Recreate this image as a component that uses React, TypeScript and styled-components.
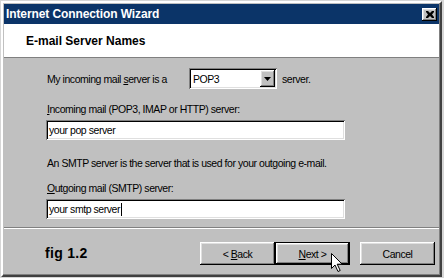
import React from "react";
import styled, { createGlobalStyle } from "styled-components";

const GlobalStyle = createGlobalStyle`
	html, body {
		margin: 0;
		padding: 0;
		background: #d6d6d6;
		width: 444px;
		height: 278px;
		overflow: hidden;
	}
	body {
		font-family: "Liberation Sans", Arial, sans-serif;
		font-size: 10.5px;
		letter-spacing: -0.45px;
		color: #000;
	}
`;

const raised = `
	box-shadow: inset -1px -1px #000, inset 1px 1px #fff, inset -2px -2px #808080,
		inset 2px 2px #dfdfdf;
`;

const sunken = `
	box-shadow: inset 1px 1px #808080, inset -1px -1px #fff, inset 2px 2px #000,
		inset -2px -2px #dfdfdf;
`;

const App = () => {
	return (
		<>
			<GlobalStyle />
			<Window>
				<TitleBar>
					<TitleText>Internet Connection Wizard</TitleText>
					<CloseButton aria-label="Close">
						<svg width="8" height="7" viewBox="0 0 8 7">
							<path
								d="M0 0h2l2 2 2-2h2v1L6 3.5 8 6v1H6L4 5 2 7H0V6l2-2.5L0 1z"
								fill="#000"
							/>
						</svg>
					</CloseButton>
				</TitleBar>

				<Header>
					<HeaderTitle>E-mail Server Names</HeaderTitle>
				</Header>

				<Body>
					<Row $top={10}>
						<RowLabel>
							My incoming mail <u>s</u>erver is a
						</RowLabel>
						<Select>
							<SelectValue>POP3</SelectValue>
							<SelectButton>
								<svg width="7" height="4" viewBox="0 0 7 4">
									<path d="M0 0h7L3.5 4z" fill="#000" />
								</svg>
							</SelectButton>
						</Select>
						<Suffix>server.</Suffix>
					</Row>

					<Label $top={14}>
						<u>I</u>ncoming mail (POP3, IMAP or HTTP) server:
					</Label>
					<TextBox $top={4}>your pop server</TextBox>

					<Label $top={17}>
						An SMTP server is the server that is used for your outgoing e-mail.
					</Label>
					<Label $top={12}>
						<u>O</u>utgoing mail (SMTP) server:
					</Label>
					<TextBox $top={4}>
						your smtp server
						<Caret />
					</TextBox>
				</Body>

				<Separator />

				<Footer>
					<FigLabel>fig 1.2</FigLabel>
					<ButtonGroup>
						<Button>
							&lt; <u>B</u>ack
						</Button>
						<Button $default>
							<u>N</u>ext &gt;
						</Button>
						<Button $gap={10}>Cancel</Button>
					</ButtonGroup>
				</Footer>

				<Pointer width="12" height="20" viewBox="0 0 12 20">
					<path
						d="M0.5 0.5v15l3.5-3.5 3 6.5 2.2-1-3-6.3h5z"
						fill="#fff"
						stroke="#000"
						strokeWidth="1"
						strokeLinejoin="miter"
					/>
				</Pointer>
			</Window>
		</>
	);
};

const Window = styled.div`
	position: relative;
	box-sizing: border-box;
	width: 441px;
	height: 276px;
	margin: 1px 0 0 1px;
	padding: 1px;
	background: #c0c0c0;
	border-top: 2px solid #ffffff;
	border-left: 2px solid #ffffff;
	border-right: 2px solid #404040;
	border-bottom: 2px solid #404040;
	box-shadow: inset -1px -1px #808080;
	display: flex;
	flex-direction: column;
	overflow: hidden;
`;

const TitleBar = styled.div`
	height: 20px;
	flex-shrink: 0;
	background: #0b3468;
	display: flex;
	align-items: center;
	justify-content: space-between;
	padding: 0 2px 0 2px;
`;

const TitleText = styled.span`
	font-weight: bold;
	font-size: 12px;
	letter-spacing: -0.1px;
	color: #fff;
`;

const CloseButton = styled.button`
	width: 15px;
	height: 13px;
	padding: 0;
	border: none;
	background: #c0c0c0;
	display: flex;
	align-items: center;
	justify-content: center;
	${raised}
`;

const Header = styled.div`
	height: 33px;
	flex-shrink: 0;
	background: #fff;
	border-bottom: 1px solid #808080;
	display: flex;
	align-items: center;
	padding-left: 22px;
`;

const HeaderTitle = styled.h1`
	margin: 0;
	font-size: 12px;
	font-weight: bold;
	letter-spacing: 0;
`;

const Body = styled.div`
	height: 169px;
	flex-shrink: 0;
	display: flex;
	flex-direction: column;
	padding-left: 42px;
`;

const Row = styled.div<{ $top: number }>`
	margin-top: ${(p) => p.$top}px;
	display: flex;
	align-items: center;
	height: 21px;
`;

const RowLabel = styled.span`
	width: 142px;
	padding-left: 1px;
`;

const Select = styled.div`
	box-sizing: border-box;
	width: 88px;
	height: 21px;
	background: #fff;
	${sunken}
	display: flex;
	align-items: center;
	justify-content: space-between;
	padding: 2px;
`;

const SelectValue = styled.span`
	padding-left: 2px;
`;

const SelectButton = styled.span`
	box-sizing: border-box;
	width: 15px;
	height: 17px;
	background: #c0c0c0;
	${raised}
	display: flex;
	align-items: center;
	justify-content: center;
`;

const Suffix = styled.span`
	margin-left: 5px;
`;

const Label = styled.div<{ $top: number }>`
	margin-top: ${(p) => p.$top}px;
	line-height: 13px;
	padding-left: 1px;
`;

const TextBox = styled.div<{ $top: number }>`
	box-sizing: border-box;
	margin-top: ${(p) => p.$top}px;
	width: 299px;
	height: 20px;
	background: #fff;
	${sunken}
	display: flex;
	align-items: center;
	padding: 0 3px;
`;

const Caret = styled.span`
	display: inline-block;
	width: 1px;
	height: 13px;
	background: #000;
	margin-left: 1px;
`;

const Separator = styled.div`
	flex-shrink: 0;
	height: 1px;
	background: #808080;
	border-bottom: 1px solid #fff;
`;

const Footer = styled.div`
	flex: 1;
	display: flex;
	align-items: flex-start;
	justify-content: space-between;
	padding: 13px 4px 0 41px;
`;

const FigLabel = styled.span`
	font-weight: bold;
	font-size: 14px;
	letter-spacing: 0.3px;
	line-height: 22px;
`;

const ButtonGroup = styled.div`
	display: flex;
`;

const Button = styled.button<{ $default?: boolean; $gap?: number }>`
	box-sizing: border-box;
	width: 75px;
	height: 23px;
	margin-left: ${(p) => p.$gap ?? 0}px;
	padding: 0;
	background: #c0c0c0;
	font: inherit;
	letter-spacing: inherit;
	color: #000;
	border: ${(p) => (p.$default ? "1px solid #000" : "none")};
	${raised}
`;

const Pointer = styled.svg`
	position: absolute;
	left: 328px;
	top: 250px;
`;

export default App;
